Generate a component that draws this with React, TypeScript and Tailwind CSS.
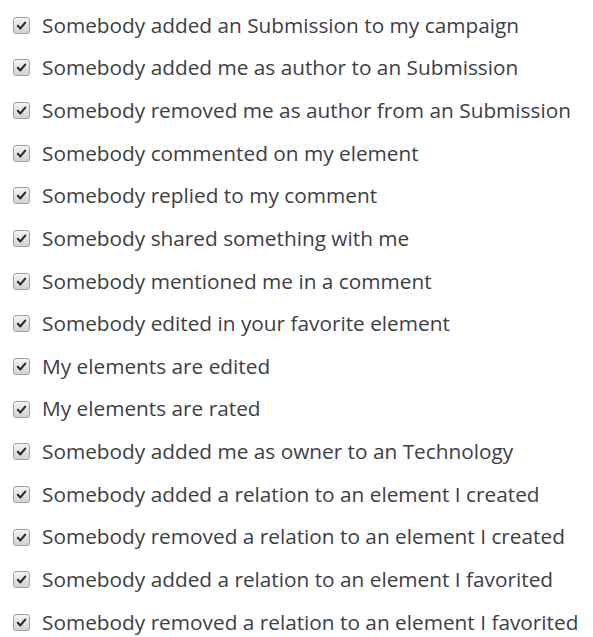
const items = [
  "Somebody added an Submission to my campaign",
  "Somebody added me as author to an Submission",
  "Somebody removed me as author from an Submission",
  "Somebody commented on my element",
  "Somebody replied to my comment",
  "Somebody shared something with me",
  "Somebody mentioned me in a comment",
  "Somebody edited in your favorite element",
  "My elements are edited",
  "My elements are rated",
  "Somebody added me as owner to an Technology",
  "Somebody added a relation to an element I created",
  "Somebody removed a relation to an element I created",
  "Somebody added a relation to an element I favorited",
  "Somebody removed a relation to an element I favorited",
];

function CheckBox() {
  return (
    <span className="flex h-[17px] w-[17px] shrink-0 items-center justify-center rounded-[3px] border border-[#a0a0a0] bg-gradient-to-b from-[#f4f4f4] to-[#d2d2d2]">
      <svg viewBox="0 0 12 12" className="h-[11px] w-[11px]">
        <path d="M2 6.4 L4.8 9.2 L10 2.8" fill="none" stroke="#2a2a2a" strokeWidth="2.3" strokeLinecap="round" strokeLinejoin="round" />
      </svg>
    </span>
  );
}

export default function App() {
  return (
    <div className="min-h-[637px] w-[593px] bg-white pt-[4px] font-['Open_Sans',sans-serif]">
      {items.map((label) => (
        <label key={label} className="flex h-[42.65px] items-center pl-[13px]">
          <CheckBox />
          <span className="ml-[12px] text-[20.8px] text-[#3e3e46]">{label}</span>
        </label>
      ))}
    </div>
  );
}
